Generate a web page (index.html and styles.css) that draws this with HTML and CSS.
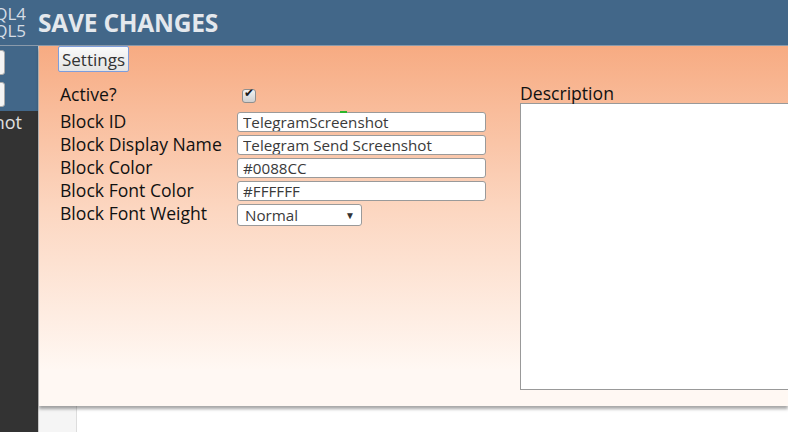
FILE: index.html
```html
<!DOCTYPE html>
<html lang="en">
<head>
    <meta charset="UTF-8">
    <title>Block Settings</title>
    <link rel="stylesheet" href="styles.css">
</head>
<body>

<header class="topbar">
    <div class="versions">
        <span>MQL4</span>
        <span>MQL5</span>
    </div>
    <h1>SAVE CHANGES</h1>
</header>

<div class="layout">
    <aside class="sidebar">
        <div class="side-top">
            <button class="side-btn"></button>
            <button class="side-btn"></button>
        </div>
        <div class="side-item">TelegramScreenshot</div>
    </aside>

    <div class="content">
        <section class="panel">
            <div class="tabs">
                <button class="tab">Settings</button>
            </div>
            <div class="form">
                <div class="fields">
                    <label class="row row-active">
                        <span class="label">Active?</span>
                        <input type="checkbox" class="check" checked>
                    </label>
                    <label class="row">
                        <span class="label">Block ID</span>
                        <span class="field-wrap">
                            <span class="marker"></span>
                            <input type="text" value="TelegramScreenshot">
                        </span>
                    </label>
                    <label class="row">
                        <span class="label">Block Display Name</span>
                        <input type="text" value="Telegram Send Screenshot">
                    </label>
                    <label class="row">
                        <span class="label">Block Color</span>
                        <input type="text" value="#0088CC">
                    </label>
                    <label class="row">
                        <span class="label">Block Font Color</span>
                        <input type="text" value="#FFFFFF">
                    </label>
                    <label class="row">
                        <span class="label">Block Font Weight</span>
                        <span class="select">Normal <span class="arrow">&#9660;</span></span>
                    </label>
                </div>
                <div class="description">
                    <div class="label">Description</div>
                    <textarea></textarea>
                </div>
            </div>
        </section>
        <div class="below">
            <div class="gutter"></div>
        </div>
    </div>
</div>

</body>
</html>
```

FILE: styles.css
```css
body {
    font-family: "Open Sans", sans-serif;
    margin: 0;
    padding: 0;
    width: 788px;
    height: 432px;
    overflow: hidden;
    background-color: #fff;
}
.topbar {
    display: flex;
    align-items: center;
    height: 46px;
    background-color: #426789;
    border-bottom: 1px solid #8a9aab;
    box-sizing: border-box;
}
.versions {
    width: 26px;
    flex-shrink: 0;
    overflow: hidden;
    display: flex;
    flex-direction: column;
    align-items: flex-end;
    color: #d6dde5;
    font-size: 17px;
    line-height: 17px;
    margin-top: -2px;
}
.topbar h1 {
    margin: 0 0 0 12px;
    font-size: 24.5px;
    font-weight: bold;
    color: #e4e8ed;
    letter-spacing: -0.2px;
}
.layout {
    display: flex;
    height: 386px;
}
.sidebar {
    width: 38px;
    flex-shrink: 0;
    background-color: #333;
    border-right: 1px solid #c8c8c8;
    overflow: hidden;
}
.side-top {
    background-color: #426789;
    height: 65px;
    padding-top: 4px;
    box-sizing: border-box;
}
.side-btn {
    display: block;
    width: 12px;
    height: 25px;
    margin: 0 0 7px -9px;
    background: #f4f4f4;
    border: 1px solid #aaa;
    border-radius: 3px;
}
.side-item {
    color: #e0e0e0;
    font-size: 18px;
    line-height: 22px;
    width: 22px;
    display: flex;
    justify-content: flex-end;
    white-space: nowrap;
}
.content {
    flex: 1;
    display: flex;
    flex-direction: column;
    min-width: 0;
}
.panel {
    height: 360px;
    flex-shrink: 0;
    background: linear-gradient(#f7ab82, #fcd6c0 45%, #fff8f3 90%);
    box-shadow: 0 3px 3px rgba(0, 0, 0, 0.35);
    padding-left: 19px;
    position: relative;
    z-index: 1;
}
.tab {
    font-family: "Open Sans", sans-serif;
    font-size: 17px;
    color: #333;
    height: 26px;
    padding: 0 3px;
    margin-top: 0;
    background: linear-gradient(#fafafa, #e4e4e4);
    border: 1px solid #7e9ddb;
    border-radius: 2px;
}
.form {
    display: flex;
    margin-top: 12px;
}
.fields {
    width: 428px;
    flex-shrink: 0;
    margin-left: 2px;
}
.row {
    display: flex;
    align-items: flex-start;
    height: 23px;
    color: #111;
}
.row-active {
    height: 27px;
}
.label {
    width: 177px;
    flex-shrink: 0;
    line-height: 20px;
    font-size: 17.6px;
    color: #111;
    white-space: nowrap;
}
.check {
    appearance: none;
    -webkit-appearance: none;
    margin: 5px 0 0 5px;
    width: 14px;
    height: 14px;
    border: 1px solid #8f8f8f;
    border-radius: 3px;
    background: linear-gradient(#f2f2f2, #cfcfcf);
    position: relative;
}
.check:checked::after {
    content: "\2714";
    position: absolute;
    left: 1px;
    top: -4px;
    font-family: "DejaVu Sans", sans-serif;
    font-size: 12px;
    color: #1a1a1a;
}
.field-wrap {
    position: relative;
}
.marker {
    position: absolute;
    left: 103px;
    top: 0;
    width: 7px;
    height: 2px;
    background-color: #2bb52b;
}
.row input[type="text"] {
    width: 249px;
    height: 20px;
    margin-top: 1px;
    box-sizing: border-box;
    border: 1px solid #9a9a9a;
    border-radius: 3px;
    padding: 0 5px;
    font-family: "Open Sans", sans-serif;
    font-size: 15.2px;
    color: #3a3a3a;
}
.select {
    display: flex;
    align-items: center;
    justify-content: space-between;
    width: 125px;
    height: 22px;
    margin-top: 1px;
    box-sizing: border-box;
    border: 1px solid #9a9a9a;
    border-radius: 3px;
    padding: 0 6px 0 7px;
    background: #fff;
    font-size: 15.2px;
    color: #3a3a3a;
}
.arrow {
    font-size: 10px;
    color: #333;
}
.description {
    margin-left: 32px;
    margin-top: -1px;
}
.description .label {
    width: auto;
}
.description textarea {
    display: block;
    width: 300px;
    height: 287px;
    margin: 0;
    border: 1px solid #999;
    box-sizing: border-box;
    resize: none;
}
.below {
    flex: 1;
}
.gutter {
    width: 37px;
    height: 100%;
    background-color: #f5f5f5;
    border-right: 1px solid #ddd;
}
```
